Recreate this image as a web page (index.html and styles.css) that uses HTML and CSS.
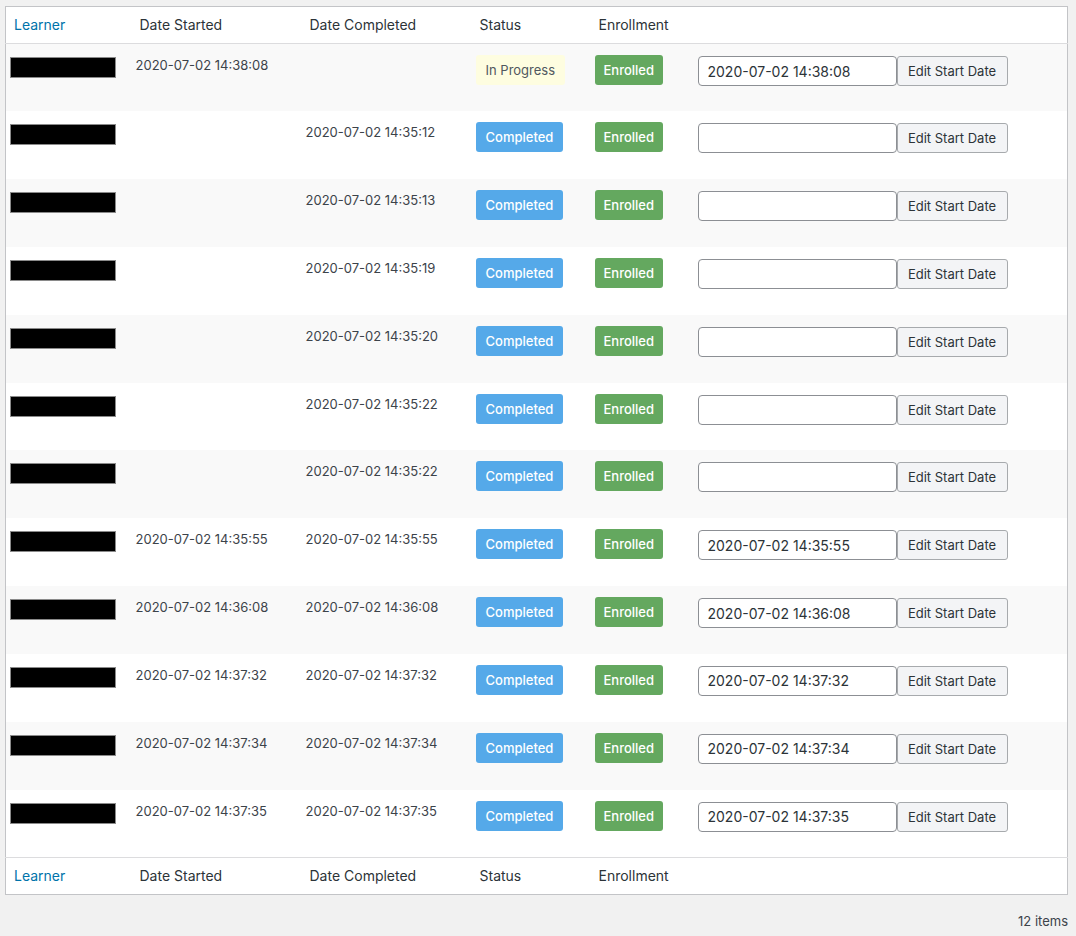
FILE: index.html
```html
<!DOCTYPE html>
<html lang="en">
<head>
    <meta charset="UTF-8">
    <title>Learners</title>
    <link rel="stylesheet" href="styles.css">
</head>
<body>
    <div class="wrap">
        <table class="learners">
            <colgroup>
                <col class="c-learner">
                <col class="c-start">
                <col class="c-done">
                <col class="c-status">
                <col class="c-enroll">
                <col class="c-edit">
            </colgroup>
            <thead>
                <tr>
                    <th class="first"><a href="#">Learner</a></th>
                    <th>Date Started</th>
                    <th>Date Completed</th>
                    <th>Status</th>
                    <th>Enrollment</th>
                    <th></th>
                </tr>
            </thead>
            <tbody>
                <tr>
                    <td class="first"><span class="redact"></span></td>
                    <td>2020-07-02 14:38:08</td>
                    <td></td>
                    <td><span class="badge progress">In Progress</span></td>
                    <td><span class="badge enrolled">Enrolled</span></td>
                    <td><input class="date-input" type="text" value="2020-07-02 14:38:08"><button class="edit-btn">Edit Start Date</button></td>
                </tr>
                <tr>
                    <td class="first"><span class="redact"></span></td>
                    <td></td>
                    <td>2020-07-02 14:35:12</td>
                    <td><span class="badge completed">Completed</span></td>
                    <td><span class="badge enrolled">Enrolled</span></td>
                    <td><input class="date-input" type="text" value=""><button class="edit-btn">Edit Start Date</button></td>
                </tr>
                <tr>
                    <td class="first"><span class="redact"></span></td>
                    <td></td>
                    <td>2020-07-02 14:35:13</td>
                    <td><span class="badge completed">Completed</span></td>
                    <td><span class="badge enrolled">Enrolled</span></td>
                    <td><input class="date-input" type="text" value=""><button class="edit-btn">Edit Start Date</button></td>
                </tr>
                <tr>
                    <td class="first"><span class="redact"></span></td>
                    <td></td>
                    <td>2020-07-02 14:35:19</td>
                    <td><span class="badge completed">Completed</span></td>
                    <td><span class="badge enrolled">Enrolled</span></td>
                    <td><input class="date-input" type="text" value=""><button class="edit-btn">Edit Start Date</button></td>
                </tr>
                <tr>
                    <td class="first"><span class="redact"></span></td>
                    <td></td>
                    <td>2020-07-02 14:35:20</td>
                    <td><span class="badge completed">Completed</span></td>
                    <td><span class="badge enrolled">Enrolled</span></td>
                    <td><input class="date-input" type="text" value=""><button class="edit-btn">Edit Start Date</button></td>
                </tr>
                <tr>
                    <td class="first"><span class="redact"></span></td>
                    <td></td>
                    <td>2020-07-02 14:35:22</td>
                    <td><span class="badge completed">Completed</span></td>
                    <td><span class="badge enrolled">Enrolled</span></td>
                    <td><input class="date-input" type="text" value=""><button class="edit-btn">Edit Start Date</button></td>
                </tr>
                <tr>
                    <td class="first"><span class="redact"></span></td>
                    <td></td>
                    <td>2020-07-02 14:35:22</td>
                    <td><span class="badge completed">Completed</span></td>
                    <td><span class="badge enrolled">Enrolled</span></td>
                    <td><input class="date-input" type="text" value=""><button class="edit-btn">Edit Start Date</button></td>
                </tr>
                <tr>
                    <td class="first"><span class="redact"></span></td>
                    <td>2020-07-02 14:35:55</td>
                    <td>2020-07-02 14:35:55</td>
                    <td><span class="badge completed">Completed</span></td>
                    <td><span class="badge enrolled">Enrolled</span></td>
                    <td><input class="date-input" type="text" value="2020-07-02 14:35:55"><button class="edit-btn">Edit Start Date</button></td>
                </tr>
                <tr>
                    <td class="first"><span class="redact"></span></td>
                    <td>2020-07-02 14:36:08</td>
                    <td>2020-07-02 14:36:08</td>
                    <td><span class="badge completed">Completed</span></td>
                    <td><span class="badge enrolled">Enrolled</span></td>
                    <td><input class="date-input" type="text" value="2020-07-02 14:36:08"><button class="edit-btn">Edit Start Date</button></td>
                </tr>
                <tr>
                    <td class="first"><span class="redact"></span></td>
                    <td>2020-07-02 14:37:32</td>
                    <td>2020-07-02 14:37:32</td>
                    <td><span class="badge completed">Completed</span></td>
                    <td><span class="badge enrolled">Enrolled</span></td>
                    <td><input class="date-input" type="text" value="2020-07-02 14:37:32"><button class="edit-btn">Edit Start Date</button></td>
                </tr>
                <tr>
                    <td class="first"><span class="redact"></span></td>
                    <td>2020-07-02 14:37:34</td>
                    <td>2020-07-02 14:37:34</td>
                    <td><span class="badge completed">Completed</span></td>
                    <td><span class="badge enrolled">Enrolled</span></td>
                    <td><input class="date-input" type="text" value="2020-07-02 14:37:34"><button class="edit-btn">Edit Start Date</button></td>
                </tr>
                <tr>
                    <td class="first"><span class="redact"></span></td>
                    <td>2020-07-02 14:37:35</td>
                    <td>2020-07-02 14:37:35</td>
                    <td><span class="badge completed">Completed</span></td>
                    <td><span class="badge enrolled">Enrolled</span></td>
                    <td><input class="date-input" type="text" value="2020-07-02 14:37:35"><button class="edit-btn">Edit Start Date</button></td>
                </tr>
            </tbody>
            <tfoot>
                <tr>
                    <th class="first"><a href="#">Learner</a></th>
                    <th>Date Started</th>
                    <th>Date Completed</th>
                    <th>Status</th>
                    <th>Enrollment</th>
                    <th></th>
                </tr>
            </tfoot>
        </table>
        <div class="item-count">12 items</div>
    </div>
</body>
</html>
```

FILE: styles.css
```css
body {
    margin: 0;
    background: #f1f1f1;
    font-family: Inter, "Noto Sans", sans-serif;
    color: #3c434a;
}
.wrap {
    padding: 6px 8px 0 5px;
}
.learners {
    width: 100%;
    border-collapse: collapse;
    table-layout: fixed;
    background: #ffffff;
    border: 1px solid #c3c4c7;
}
.c-learner { width: 122px; }
.c-start { width: 170px; }
.c-done { width: 170px; }
.c-status { width: 119px; }
.c-enroll { width: 103px; }
.learners th {
    height: 35px;
    padding: 0 11px 1px 12px;
    text-align: left;
    font-size: 14px;
    font-weight: 400;
    color: #2c3338;
}
.learners th.first {
    padding-left: 8px;
}
.learners thead th {
    border-bottom: 1px solid #dcdcde;
}
.learners tfoot th {
    border-top: 1px solid #dcdcde;
}
.learners th a {
    color: #0073aa;
    text-decoration: none;
}
.learners tbody tr {
    height: 67.84px;
}
.learners tbody tr:nth-child(odd) {
    background: #f9f9f9;
}
.learners td {
    vertical-align: top;
    padding: 11px 8px 0;
    font-size: 13px;
    line-height: 20px;
    white-space: nowrap;
}
.learners td.first {
    padding-left: 4px;
}
.redact {
    display: block;
    width: 104px;
    height: 19px;
    margin-top: 2px;
    background: #000000;
    border: 1px solid #8a8a8a;
}
.badge {
    display: inline-block;
    height: 30px;
    line-height: 30px;
    padding: 0 10px;
    border-radius: 3px;
    font-size: 13px;
    font-weight: 500;
    color: #ffffff;
}
.badge.completed {
    background: #55a9e9;
}
.badge.enrolled {
    background: #64a85f;
    padding: 0 9px;
}
.badge.progress {
    background: #fefde0;
    color: #50575e;
    font-weight: 400;
}
.date-input {
    box-sizing: border-box;
    width: 199px;
    height: 30px;
    margin: 1px 0 0;
    padding: 0 9px;
    vertical-align: top;
    border: 1px solid #8c8f94;
    border-radius: 4px;
    font-family: inherit;
    font-size: 14px;
    color: #2c3338;
    background: #ffffff;
}
.edit-btn {
    box-sizing: border-box;
    width: 111px;
    height: 30px;
    margin: 1px 0 0;
    padding: 0;
    vertical-align: top;
    border: 1px solid #a7aaad;
    border-radius: 3px;
    background: #f3f4f6;
    font-family: inherit;
    font-size: 13px;
    color: #2c3338;
}
.item-count {
    padding: 18px 0 0;
    text-align: right;
    font-size: 13px;
    color: #3c434a;
}
```
